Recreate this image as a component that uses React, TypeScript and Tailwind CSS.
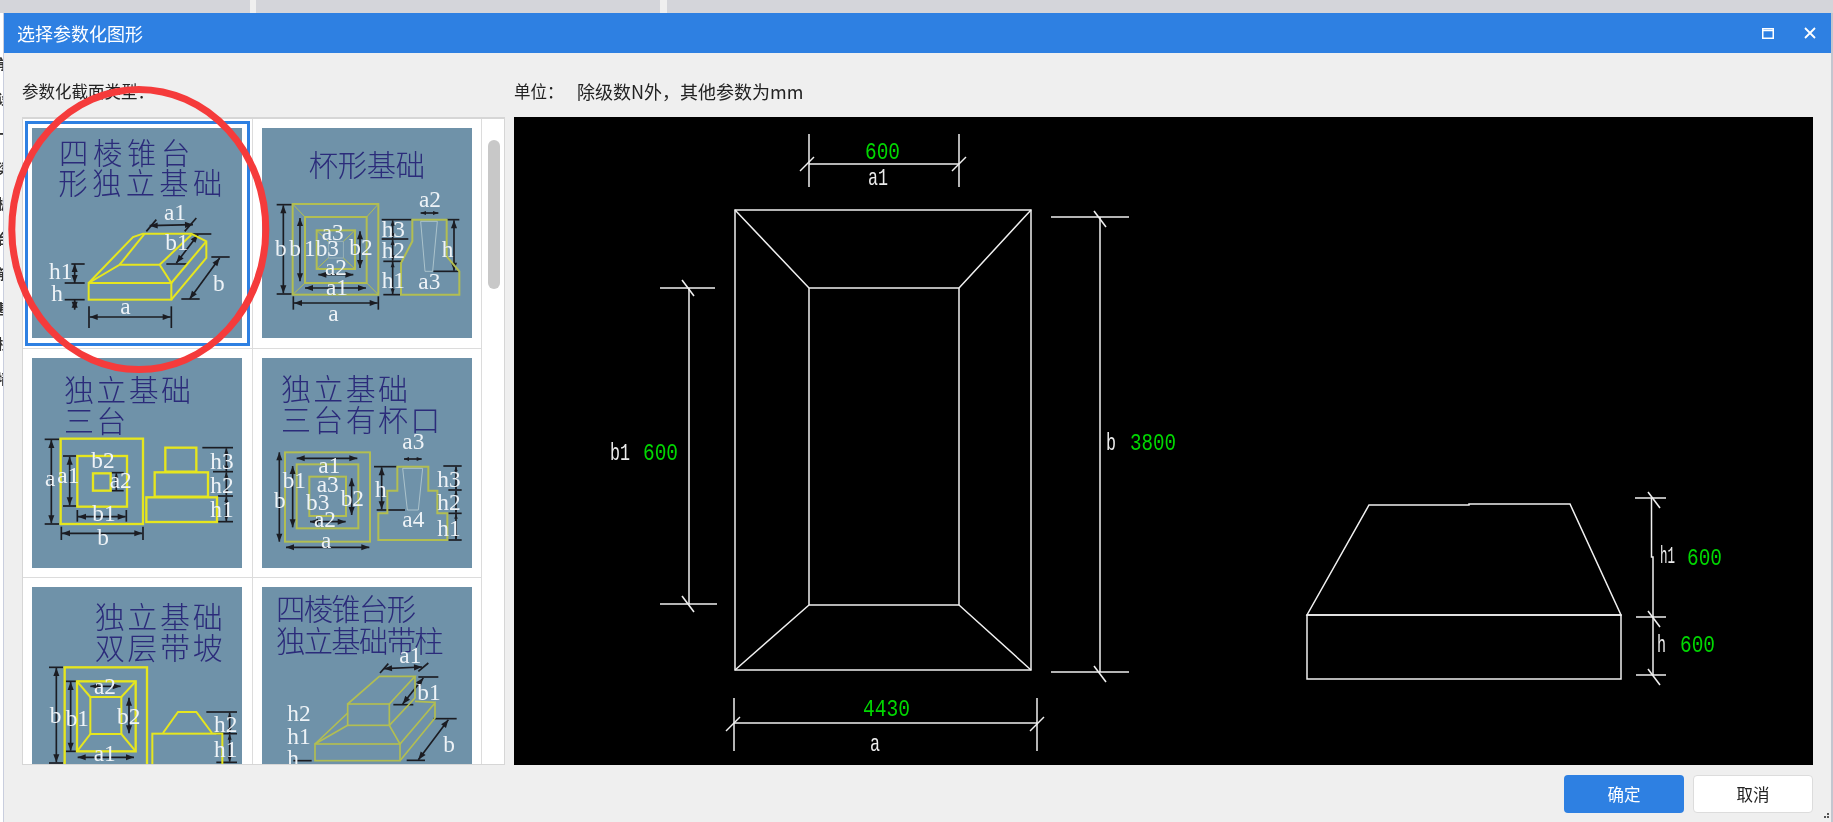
import React from "react";

const YELLOW = "#e6e61e";
const OLIVE = "#b2be52";
const DIM = "#1b1c22";

type Pt = [number, number];

// thumbnails are drawn in a 630 unit box (3 units = 1px on screen)
const Box = ({ x, y, w, h, c, sw = 6 }: { x: number; y: number; w: number; h: number; c: string; sw?: number }) => (
  <rect x={x} y={y} width={w} height={h} fill="none" stroke={c} strokeWidth={sw} />
);

const Line = ({ pts, c, sw = 6, close }: { pts: Pt[]; c: string; sw?: number; close?: boolean }) => {
  const s = pts.map((p) => p.join(",")).join(" ");
  return close ? (
    <polygon points={s} fill="none" stroke={c} strokeWidth={sw} />
  ) : (
    <polyline points={s} fill="none" stroke={c} strokeWidth={sw} />
  );
};

const Tick = ({ a, b }: { a: Pt; b: Pt }) => (
  <line x1={a[0]} y1={a[1]} x2={b[0]} y2={b[1]} stroke={DIM} strokeWidth={5} />
);

const Dim = ({ a, b, head = 24 }: { a: Pt; b: Pt; head?: number }) => {
  const dx = b[0] - a[0];
  const dy = b[1] - a[1];
  const len = Math.hypot(dx, dy) || 1;
  const ux = dx / len;
  const uy = dy / len;
  const arrow = (p: Pt, dir: number) => {
    const bx = p[0] + ux * head * dir;
    const by = p[1] + uy * head * dir;
    const hw = head * 0.38;
    return `${p[0]},${p[1]} ${bx - uy * hw},${by + ux * hw} ${bx + uy * hw},${by - ux * hw}`;
  };
  return (
    <g>
      <line x1={a[0]} y1={a[1]} x2={b[0]} y2={b[1]} stroke={DIM} strokeWidth={5} />
      <polygon points={arrow(a, 1)} fill={DIM} />
      <polygon points={arrow(b, -1)} fill={DIM} />
    </g>
  );
};

const Labels = ({ items, size = 70 }: { items: [string, number, number][]; size?: number }) => (
  <g fontFamily="'Liberation Serif', serif" fontSize={size} fill="#eef3f7">
    {items.map(([t, x, y], i) => (
      <text key={i} x={x} y={y}>
        {t}
      </text>
    ))}
  </g>
);

const Title = ({ t, x, y, size, pitch }: { t: string; x: number; y: number; size: number; pitch: number }) => (
  <text
    x={x}
    y={y}
    fontFamily="'Noto Sans CJK SC', sans-serif"
    fontWeight={300}
    fontSize={size}
    letterSpacing={pitch - size}
    fill="#2b2b7a"
  >
    {t}
  </text>
);

const Thumb = ({ ox, oy, children }: { ox: number; oy: number; children: React.ReactNode }) => (
  <svg viewBox={`${ox} ${oy} 630 630`} className="block h-[210px] w-[210px] bg-[#6f92a9]">
    {children}
  </svg>
);

const Thumb1 = () => (
  <Thumb ox={97} oy={385}>
    <Title t="四棱锥台" x={178} y={493} size={88} pitch={102} />
    <Title t="形独立基础" x={176} y={583} size={88} pitch={101} />
    <Tick a={[440, 695]} b={[470, 660]} />
    <Tick a={[555, 695]} b={[590, 655]} />
    <Tick a={[575, 703]} b={[635, 703]} />
    <Tick a={[500, 793]} b={[565, 793]} />
    <Tick a={[635, 772]} b={[690, 772]} />
    <Tick a={[545, 898]} b={[600, 898]} />
    <Tick a={[215, 793]} b={[255, 793]} />
    <Tick a={[195, 850]} b={[255, 850]} />
    <Tick a={[195, 900]} b={[255, 900]} />
    <Tick a={[268, 920]} b={[268, 985]} />
    <Tick a={[515, 920]} b={[515, 985]} />
    <Dim a={[450, 678]} b={[580, 675]} />
    <Dim a={[595, 705]} b={[530, 790]} />
    <Dim a={[660, 775]} b={[570, 898]} />
    <Dim a={[225, 793]} b={[225, 850]} />
    <Dim a={[225, 900]} b={[225, 930]} />
    <Dim a={[270, 952]} b={[513, 952]} />
    <Box x={267} y={850} w={248} h={50} c={YELLOW} />
    <Line c={YELLOW} pts={[[267, 850], [400, 712], [430, 702], [575, 702], [620, 725], [620, 775], [515, 900]]} />
    <Line c={YELLOW} pts={[[515, 850], [620, 725]]} />
    <Line c={YELLOW} pts={[[267, 850], [360, 795], [480, 795], [515, 850]]} />
    <Line c={YELLOW} pts={[[360, 795], [435, 702]]} />
    <Line c={YELLOW} pts={[[480, 795], [575, 705]]} />
    <Labels
      items={[
        ["a1", 493, 660],
        ["b1", 497, 752],
        ["b", 640, 875],
        ["h1", 148, 838],
        ["h", 155, 905],
        ["a", 362, 942],
      ]}
    />
  </Thumb>
);

const Thumb2 = () => (
  <Thumb ox={786} oy={385}>
    <Title t="杯形基础" x={926} y={529} size={88} pitch={87} />
    <Tick a={[830, 615]} b={[875, 615]} />
    <Tick a={[830, 883]} b={[875, 883]} />
    <Tick a={[880, 890]} b={[880, 930]} />
    <Tick a={[1135, 890]} b={[1135, 930]} />
    <Tick a={[1145, 660]} b={[1235, 660]} />
    <Tick a={[1145, 718]} b={[1225, 718]} />
    <Tick a={[1150, 785]} b={[1205, 785]} />
    <Tick a={[1150, 885]} b={[1200, 885]} />
    <Tick a={[1340, 660]} b={[1378, 660]} />
    <Tick a={[1300, 815]} b={[1378, 815]} />
    <Dim a={[850, 617]} b={[850, 881]} />
    <Dim a={[900, 655]} b={[900, 845]} />
    <Dim a={[1080, 695]} b={[1080, 805]} />
    <Dim a={[915, 865]} b={[1098, 865]} />
    <Dim a={[955, 825]} b={[1060, 825]} />
    <Dim a={[882, 910]} b={[1133, 910]} />
    <Dim a={[1262, 640]} b={[1315, 640]} head={16} />
    <Dim a={[1362, 662]} b={[1362, 813]} />
    <Dim a={[1178, 662]} b={[1178, 716]} head={16} />
    <Dim a={[1178, 720]} b={[1178, 783]} head={16} />
    <Dim a={[1178, 787]} b={[1178, 883]} head={16} />
    <Box x={878} y={613} w={257} h={272} c={OLIVE} />
    <Box x={915} y={652} w={185} h={198} c={OLIVE} />
    <Box x={950} y={692} w={115} h={116} c={OLIVE} />
    <Box x={985} y={725} w={45} h={50} c="#9fb6bd" sw={2.5} />
    <Line c={OLIVE} sw={3} pts={[[878, 613], [915, 652]]} />
    <Line c={OLIVE} sw={3} pts={[[1135, 613], [1100, 652]]} />
    <Line c={OLIVE} sw={3} pts={[[878, 885], [915, 850]]} />
    <Line c={OLIVE} sw={3} pts={[[1135, 885], [1100, 850]]} />
    <Line c={OLIVE} sw={3} pts={[[950, 692], [985, 725]]} />
    <Line c={OLIVE} sw={3} pts={[[1065, 692], [1030, 725]]} />
    <Line c={OLIVE} sw={3} pts={[[950, 808], [985, 775]]} />
    <Line c={OLIVE} sw={3} pts={[[1065, 808], [1030, 775]]} />
    <Line c={OLIVE} close pts={[[1237, 660], [1340, 660], [1340, 770], [1378, 815], [1378, 885], [1203, 885], [1203, 790], [1237, 725]]} />
    <Line c="#b7ccd2" sw={2.5} close pts={[[1262, 665], [1312, 665], [1298, 815], [1275, 815]]} />
    <Labels
      items={[
        ["b", 825, 770],
        ["b", 868, 770],
        ["1b3", 912, 768],
        ["a3", 965, 722],
        ["b2", 1048, 765],
        ["a2", 975, 825],
        ["a1", 978, 885],
        ["a", 985, 965],
        ["a2", 1257, 622],
        ["h3", 1145, 712],
        ["h2", 1145, 775],
        ["h1", 1145, 865],
        ["h", 1325, 772],
        ["a3", 1255, 868],
      ]}
    />
  </Thumb>
);

const Thumb3 = () => (
  <Thumb ox={97} oy={54}>
    <Title t="独立基础" x={193} y={183} size={90} pitch={97} />
    <Title t="三台" x={193} y={275} size={90} pitch={97} />
    <Tick a={[135, 298]} b={[178, 298]} />
    <Tick a={[135, 552]} b={[178, 552]} />
    <Tick a={[190, 348]} b={[230, 348]} />
    <Tick a={[190, 498]} b={[230, 498]} />
    <Tick a={[185, 560]} b={[185, 600]} />
    <Tick a={[430, 560]} b={[430, 600]} />
    <Tick a={[233, 510]} b={[233, 545]} />
    <Tick a={[380, 510]} b={[380, 545]} />
    <Tick a={[335, 398]} b={[372, 398]} />
    <Tick a={[335, 452]} b={[372, 452]} />
    <Tick a={[608, 323]} b={[700, 323]} />
    <Tick a={[640, 395]} b={[700, 395]} />
    <Tick a={[655, 468]} b={[700, 468]} />
    <Tick a={[655, 545]} b={[700, 545]} />
    <Dim a={[155, 300]} b={[155, 550]} />
    <Dim a={[210, 350]} b={[210, 496]} />
    <Dim a={[187, 580]} b={[428, 580]} />
    <Dim a={[235, 530]} b={[378, 530]} />
    <Dim a={[350, 400]} b={[350, 450]} head={14} />
    <Dim a={[680, 325]} b={[680, 393]} head={16} />
    <Dim a={[680, 397]} b={[680, 466]} head={16} />
    <Dim a={[680, 470]} b={[680, 543]} head={16} />
    <Box x={183} y={296} w={247} h={256} c={YELLOW} sw={7} />
    <Box x={233} y={348} w={149} h={152} c={YELLOW} sw={7} />
    <Box x={280} y={400} w={53} h={52} c={YELLOW} sw={7} />
    <Box x={497} y={323} w={93} h={72} c={YELLOW} sw={7} />
    <Box x={465} y={397} w={160} h={73} c={YELLOW} sw={7} />
    <Box x={440} y={472} w={212} h={74} c={YELLOW} sw={7} />
    <Labels
      items={[
        ["a", 136, 438],
        ["a1", 173, 430],
        ["b2", 275, 385],
        ["a2", 330, 445],
        ["b1", 278, 543],
        ["b", 293, 615],
        ["h3", 632, 387],
        ["h2", 632, 460],
        ["h1", 632, 532],
      ]}
    />
  </Thumb>
);

const Thumb4 = () => (
  <Thumb ox={786} oy={54}>
    <Title t="独立基础" x={843} y={179} size={90} pitch={97} />
    <Title t="三台有杯口" x={843} y={273} size={90} pitch={97} />
    <Tick a={[1122, 380]} b={[1190, 380]} />
    <Tick a={[1130, 510]} b={[1215, 510]} />
    <Tick a={[1330, 378]} b={[1385, 378]} />
    <Tick a={[1345, 450]} b={[1385, 450]} />
    <Tick a={[1345, 520]} b={[1385, 520]} />
    <Tick a={[1345, 600]} b={[1385, 600]} />
    <Dim a={[838, 337]} b={[838, 605]} />
    <Dim a={[878, 378]} b={[878, 562]} />
    <Dim a={[1055, 415]} b={[1055, 525]} />
    <Dim a={[890, 355]} b={[1072, 355]} />
    <Dim a={[930, 545]} b={[1037, 545]} />
    <Dim a={[858, 622]} b={[1108, 622]} />
    <Dim a={[1212, 357]} b={[1265, 357]} head={15} />
    <Dim a={[1145, 382]} b={[1145, 508]} />
    <Dim a={[1368, 380]} b={[1368, 448]} head={14} />
    <Dim a={[1368, 452]} b={[1368, 518]} head={14} />
    <Dim a={[1368, 522]} b={[1368, 598]} head={14} />
    <Box x={855} y={337} w={255} h={268} c={OLIVE} />
    <Box x={890} y={373} w={185} h={192} c={OLIVE} />
    <Box x={928} y={410} w={110} h={118} c={OLIVE} />
    <Line c={OLIVE} close pts={[[1192, 380], [1285, 380], [1285, 452], [1312, 452], [1312, 520], [1342, 520], [1342, 600], [1135, 600], [1135, 520], [1162, 520], [1162, 452], [1192, 452]]} />
    <Line c="#b7ccd2" sw={2.5} close pts={[[1208, 385], [1268, 385], [1255, 510], [1222, 510]]} />
    <Labels
      items={[
        ["a1", 955, 398],
        ["b1", 848, 443],
        ["a3", 950, 455],
        ["b", 822, 503],
        ["b3", 918, 510],
        ["b2", 1022, 498],
        ["a2", 942, 562],
        ["a", 963, 625],
        ["a3", 1207, 328],
        ["h", 1125, 470],
        ["a4", 1207, 560],
        ["h3", 1312, 440],
        ["h2", 1312, 510],
        ["h1", 1312, 588],
      ]}
    />
  </Thumb>
);

const Thumb5 = () => (
  <Thumb ox={97} oy={52}>
    <Title t="独立基础" x={285} y={174} size={90} pitch={98} />
    <Title t="双层带坡" x={285} y={269} size={90} pitch={98} />
    <Tick a={[148, 293]} b={[190, 293]} />
    <Tick a={[148, 580]} b={[190, 580]} />
    <Tick a={[198, 335]} b={[232, 335]} />
    <Tick a={[198, 545]} b={[232, 545]} />
    <Tick a={[620, 427]} b={[712, 427]} />
    <Tick a={[650, 492]} b={[712, 492]} />
    <Tick a={[650, 578]} b={[712, 578]} />
    <Dim a={[170, 295]} b={[170, 578]} />
    <Dim a={[213, 337]} b={[213, 543]} />
    <Dim a={[388, 384]} b={[388, 491]} />
    <Dim a={[234, 563]} b={[403, 563]} />
    <Dim a={[272, 350]} b={[363, 350]} />
    <Dim a={[690, 429]} b={[690, 490]} head={16} />
    <Dim a={[690, 494]} b={[690, 576]} head={16} />
    <Box x={195} y={293} w={247} h={330} c={YELLOW} sw={7} />
    <Box x={232} y={335} w={176} h={210} c={YELLOW} sw={7} />
    <Box x={272} y={382} w={93} h={111} c={YELLOW} />
    <Line c={YELLOW} pts={[[232, 335], [272, 382]]} />
    <Line c={YELLOW} pts={[[408, 335], [365, 382]]} />
    <Line c={YELLOW} pts={[[232, 545], [272, 493]]} />
    <Line c={YELLOW} pts={[[408, 545], [365, 493]]} />
    <Box x={458} y={492} w={210} h={130} c={YELLOW} />
    <Line c={YELLOW} pts={[[490, 490], [535, 427], [590, 427], [637, 490]]} />
    <Labels
      items={[
        ["b", 150, 460],
        ["b1", 198, 470],
        ["a2", 283, 372],
        ["b2", 352, 462],
        ["a1", 282, 573],
        ["h2", 643, 488],
        ["h1", 643, 562],
      ]}
    />
  </Thumb>
);

const Thumb6 = () => (
  <Thumb ox={786} oy={52}>
    <Title t="四棱锥台形" x={828} y={152} size={88} pitch={83} />
    <Title t="独立基础带柱" x={828} y={248} size={88} pitch={83} />
    <Tick a={[1140, 310]} b={[1165, 282]} />
    <Tick a={[1255, 305]} b={[1285, 280]} />
    <Tick a={[1255, 322]} b={[1315, 322]} />
    <Tick a={[1180, 405]} b={[1240, 405]} />
    <Tick a={[1300, 447]} b={[1370, 447]} />
    <Tick a={[1220, 572]} b={[1275, 572]} />
    <Tick a={[880, 573]} b={[935, 573]} />
    <Dim a={[1152, 297]} b={[1266, 292]} />
    <Dim a={[1270, 325]} b={[1208, 403]} />
    <Dim a={[1345, 450]} b={[1255, 570]} />
    <Box x={1043} y={403} w={125} h={64} c={OLIVE} sw={5} />
    <Box x={945} y={523} w={255} h={50} c={OLIVE} sw={5} />
    <Line c={OLIVE} sw={5} pts={[[1043, 403], [1138, 320], [1245, 320], [1168, 403]]} />
    <Line c={OLIVE} sw={5} pts={[[1245, 320], [1245, 385], [1168, 467]]} />
    <Line c={OLIVE} sw={5} pts={[[945, 523], [1043, 430]]} />
    <Line c={OLIVE} sw={5} pts={[[1043, 467], [945, 523]]} />
    <Line c={OLIVE} sw={5} pts={[[1168, 467], [1200, 523], [1305, 400], [1305, 445], [1200, 573]]} />
    <Line c={OLIVE} sw={5} pts={[[1245, 395], [1305, 398]]} />
    <Labels
      items={[
        ["a1", 1198, 280],
        ["b1", 1252, 392],
        ["b", 1330, 548],
        ["h2", 862, 455],
        ["h1", 862, 522],
        ["h", 862, 590],
      ]}
    />
  </Thumb>
);

const thumbs = [Thumb1, Thumb2, Thumb3, Thumb4, Thumb5, Thumb6];

// CAD preview, coordinates are page pixels so they read straight off the screenshot
const CadText = ({ t, x, y, w, green }: { t: string; x: number; y: number; w: number; green?: boolean }) => (
  <text
    x={x}
    y={y}
    textLength={w}
    lengthAdjust="spacingAndGlyphs"
    fontFamily="'Liberation Mono', monospace"
    fontSize={24}
    fill={green ? "#00d800" : "#ececec"}
  >
    {t}
  </text>
);

const Slash = ({ x, y, up }: { x: number; y: number; up?: boolean }) =>
  up ? <path d={`M${x - 7} ${y + 7}L${x + 7} ${y - 7}`} /> : <path d={`M${x - 6} ${y - 8}L${x + 6} ${y + 8}`} />;

const CadView = () => (
  <svg viewBox="514 117 1299 648" className="block h-full w-full">
    <g fill="none" stroke="#f0f0f0" strokeWidth={1.5}>
      {/* plan */}
      <path d="M735 210H1031V670H735Z" />
      <path d="M809 288H959V605H809Z" />
      <path d="M735 210L809 288M1031 210L959 288M735 670L809 605M1031 670L959 605" />
      {/* a1 */}
      <path d="M809 134V187M959 134V187M809 164H959" />
      <Slash x={807} y={164} up />
      <Slash x={959} y={164} up />
      {/* b */}
      <path d="M1051 217H1129M1100 217V672M1051 672H1129" />
      <Slash x={1100} y={219} />
      <Slash x={1100} y={674} />
      {/* b1 */}
      <path d="M660 288H715M689 288V604M660 604H717" />
      <Slash x={688} y={288} />
      <Slash x={688} y={604} />
      {/* a */}
      <path d="M734 698V751M1037 698V751M734 723H1037" />
      <Slash x={733} y={724} up />
      <Slash x={1037} y={724} up />
      {/* section */}
      <path d="M1369 505H1469V504H1570L1621 615H1307L1369 505Z" />
      <path d="M1307 615H1621V679H1307Z" />
      <path d="M1635 498H1666M1651.5 498V557H1653V675M1636 617H1666M1636 675H1666" />
      <Slash x={1654} y={500} />
      <Slash x={1654} y={619} />
      <Slash x={1654} y={677} />
    </g>
    <CadText t="600" x={865} y={159} w={35} green />
    <CadText t="a1" x={868} y={185} w={20} />
    <CadText t="b" x={1106} y={450} w={10} />
    <CadText t="3800" x={1130} y={450} w={46} green />
    <CadText t="b1" x={610} y={460} w={20} />
    <CadText t="600" x={643} y={460} w={35} green />
    <CadText t="4430" x={863} y={716} w={47} green />
    <CadText t="a" x={870} y={751} w={10} />
    <CadText t="h1" x={1660} y={563} w={15} />
    <CadText t="600" x={1687} y={565} w={35} green />
    <CadText t="h" x={1657} y={652} w={9} />
    <CadText t="600" x={1680} y={652} w={35} green />
  </svg>
);

const edgeChars = ["前", "设", "一", "梁", "板", "台", "筋", "基", "柱", "墙"];

export default function App() {
  return (
    <div className="relative h-[822px] w-[1833px] overflow-hidden bg-white font-['Noto_Sans_CJK_SC',sans-serif] text-[#222] blur-[0.4px]">
      {/* window behind the dialog */}
      <div className="flex h-[13px] bg-[#d4d5da]">
        <div className="ml-[250px] w-[6px] bg-[#efefef]" />
        <div className="ml-[404px] w-[7px] bg-[#efefef]" />
      </div>

      <div className="flex h-[809px]">
        <div className="flex w-[4px] flex-col items-end overflow-hidden border-r border-[#c9cede] pt-[40px]">
          {edgeChars.map((c, i) => (
            <span key={i} className="mb-[14px] shrink-0 text-[14px] font-semibold leading-[21px] text-[#333] [margin-right:-8px]">
              {c}
            </span>
          ))}
        </div>

        <div className="flex w-[1827px] flex-col bg-[#efefef]">
          <div className="flex h-[40px] items-center justify-between bg-[#2e80e2] pl-[13px] text-white">
            <span className="text-[18px]">选择参数化图形</span>
            <div className="flex items-center gap-[30px] pr-[15px]">
              <svg viewBox="0 0 12 11" className="h-[11px] w-[12px]" fill="none" stroke="white">
                <rect x="0.75" y="0.75" width="10.5" height="9.5" strokeWidth="1.5" />
                <path d="M1 2.5H11" strokeWidth="1.5" />
              </svg>
              <svg viewBox="0 0 12 12" className="h-[12px] w-[12px]" fill="none" stroke="white" strokeWidth="1.8">
                <path d="M1 1L11 11M11 1L1 11" />
              </svg>
            </div>
          </div>

          <div className="flex h-[64px] items-center gap-[9px] pl-[18px] pt-[12px] text-[16.5px]">
            <span className="w-[483px]">参数化截面类型：</span>
            <span className="flex">
              <span className="w-[63px]">单位：</span>
              <span className="text-[18px] leading-[24px]">除级数N外，其他参数为mm</span>
            </span>
          </div>

          <div className="flex h-[648px] gap-[9px] pl-[18px] pr-[18px]">
            <div className="flex w-[483px] overflow-hidden border border-t-2 border-[#d6d6d6] bg-white">
              <div className="grid w-[459px] shrink-0 grid-cols-2 grid-rows-[230px_229px_230px] content-start">
                {thumbs.map((Thumb, i) => (
                  <div key={i} className="relative border-b border-r border-[#dcdcdc] p-[9px]">
                    <Thumb />
                    {i === 0 && <div className="absolute inset-[2px] border-[3px] border-[#2e80e2]" />}
                  </div>
                ))}
              </div>
              <div className="pl-[6px] pt-[21px]">
                <div className="h-[149px] w-[12px] rounded-full bg-[#c8c8c8]" />
              </div>
            </div>
            <div className="h-[648px] w-[1299px] bg-black">
              <CadView />
            </div>
          </div>

          <div className="flex justify-end gap-[9px] pr-[18px] pt-[10px] text-[16.5px]">
            <button className="h-[38px] w-[120px] rounded-[4px] bg-[#2e80e2] text-white">确定</button>
            <button className="h-[38px] w-[120px] rounded-[4px] border border-[#dcdcdc] bg-white text-[#222]">取消</button>
          </div>
        </div>

        <div className="w-[2px] bg-[#c3c6cf]" />
      </div>

      {/* hand-drawn highlight over the first thumbnail */}
      <svg viewBox="0 0 280 300" className="pointer-events-none absolute left-0 top-[80px] h-[300px] w-[280px]">
        <ellipse cx="138.8" cy="149.5" rx="127" ry="140" fill="none" stroke="#f53b3b" strokeWidth="7" />
      </svg>

      {/* resize grip */}
      <svg viewBox="0 0 8 8" className="absolute bottom-[1px] right-[3px] h-[8px] w-[8px]" fill="#555">
        <rect x="5" y="0" width="2" height="2" />
        <rect x="2" y="3" width="2" height="2" />
        <rect x="5" y="3" width="2" height="2" />
      </svg>
    </div>
  );
}
